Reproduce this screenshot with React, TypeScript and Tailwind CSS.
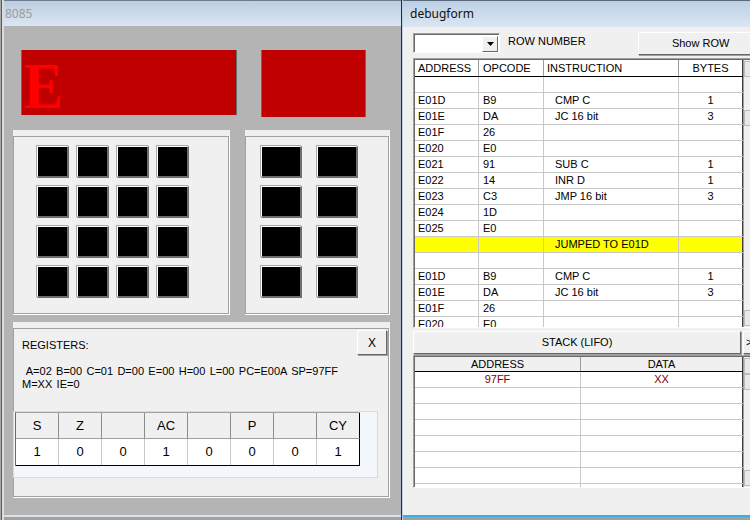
import React from "react";

const codeRows: { a: string; o: string; i: string; b: string; hl?: boolean }[] = [
  { a: "", o: "", i: "", b: "" },
  { a: "E01D", o: "B9", i: "CMP C", b: "1" },
  { a: "E01E", o: "DA", i: "JC 16 bit", b: "3" },
  { a: "E01F", o: "26", i: "", b: "" },
  { a: "E020", o: "E0", i: "", b: "" },
  { a: "E021", o: "91", i: "SUB C", b: "1" },
  { a: "E022", o: "14", i: "INR D", b: "1" },
  { a: "E023", o: "C3", i: "JMP 16 bit", b: "3" },
  { a: "E024", o: "1D", i: "", b: "" },
  { a: "E025", o: "E0", i: "", b: "" },
  { a: "", o: "", i: "JUMPED TO E01D", b: "", hl: true },
  { a: "", o: "", i: "", b: "" },
  { a: "E01D", o: "B9", i: "CMP C", b: "1" },
  { a: "E01E", o: "DA", i: "JC 16 bit", b: "3" },
  { a: "E01F", o: "26", i: "", b: "" },
  { a: "E020", o: "E0", i: "", b: "" },
];

const flags = [
  { h: "S", v: "1" },
  { h: "Z", v: "0" },
  { h: "", v: "0" },
  { h: "AC", v: "1" },
  { h: "", v: "0" },
  { h: "P", v: "0" },
  { h: "", v: "0" },
  { h: "CY", v: "1" },
];

// classic raised win32 button look
const raised =
  "bg-[#f0f0f0] border border-t-white border-l-white border-r-[#696969] border-b-[#696969] shadow-[1px_1px_0_#a0a0a0]";

const Key = ({ w }: { w: string }) => (
  <div
    className={`${w} h-[32px] bg-black border-t border-l border-t-white border-l-white border-r-2 border-b-2 border-r-[#6e6e6e] border-b-[#6e6e6e] shadow-[-1px_-1px_0_#a8a8a8]`}
  />
);

const Group = ({ className, children }: { className: string; children?: React.ReactNode }) => (
  <div className={`${className} shrink-0 bg-[#f0f0f0] pt-[6px] pr-[1px] pb-[1px]`}>
    <div className="h-full border border-[#a0a0a0] shadow-[1px_1px_0_#ffffff]">{children}</div>
  </div>
);

const ScrollBox = ({ className }: { className: string }) => (
  <div className={`${className} w-[16px] shrink-0 bg-[#e8e8e8] border border-[#bcbcbc]`} />
);

function Window8085() {
  return (
    <div className="w-[401px] h-full shrink-0 flex">
      <div className="w-[4px] h-full bg-[linear-gradient(to_right,#a8a8a8_0px,#a8a8a8_1px,#5c5c5c_1px,#5c5c5c_2px,#dcdcdc_2px,#dcdcdc_4px)]" />
      <div className="flex-1 flex flex-col">
        <div className="h-[26px] flex items-center pl-[1px] border-t border-[#6c7c8c] bg-gradient-to-b from-[#bdcddf] to-[#dbe6f2]">
          <span className="font-['Noto_Sans',sans-serif] text-[12px] text-[#9c9c9c]">8085</span>
        </div>

        <div className="flex-1 flex flex-col bg-[#b4b4b4] pl-[9px] pt-[24px]">
          {/* seven segment displays */}
          <div className="flex items-start ml-[8px] gap-[24px]">
            <div className="w-[216px] h-[65px] bg-[#c00000] border-x border-[#5f6f6f]">
              <div className="pl-[2px] pt-[10px] leading-[0.8] text-[66px] font-bold text-[#ff0000] font-['Liberation_Serif',serif] scale-x-[0.9] origin-left">
                E
              </div>
            </div>
            <div className="w-[105px] h-[67px] bg-[#c00000] border-x border-[#5f6f6f]" />
          </div>

          {/* keypads */}
          <div className="flex gap-[15px] mt-[13px]">
            <Group className="w-[217px] h-[185px]">
              <div className="grid grid-cols-4 gap-[8px] pl-[23px] pt-[9px] w-max">
                {Array.from({ length: 16 }).map((_, i) => (
                  <Key key={i} w="w-[32px]" />
                ))}
              </div>
            </Group>
            <Group className="w-[145px] h-[185px]">
              <div className="grid grid-cols-2 gap-x-[15px] gap-y-[8px] pl-[15px] pt-[9px] w-max">
                {Array.from({ length: 8 }).map((_, i) => (
                  <Key key={i} w="w-[41px]" />
                ))}
              </div>
            </Group>
          </div>

          {/* registers */}
          <Group className="w-[377px] h-[176px] mt-[7px]">
            <div className="flex flex-col">
              <div className="flex justify-between items-start">
                <div className="ml-[8px] mt-[10px] leading-[13px]">REGISTERS:</div>
                <button className={`${raised} w-[30px] h-[25px] mt-[1px] mr-[1px] flex items-center justify-center text-[12px]`}>
                  X
                </button>
              </div>
              <div className="ml-[8px] mt-[10px] leading-[13px] whitespace-pre [word-spacing:1.3px]">
                {" A=02 B=00 C=01 D=00 E=00 H=00 L=00 PC=E00A SP=97FF"}
                {"\n"}
                {"M=XX IE=0"}
              </div>
              <div className="-ml-px mt-[20px] w-[365px] h-[67px] border border-[#dadada] bg-[#f3f7fc] pl-px">
                <div className="w-max border-l border-[#696969] border-t border-t-[#a0a0a0]">
                  <div className="flex h-[26px]">
                    {flags.map((f, i) => (
                      <div
                        key={i}
                        className={`w-[43px] bg-[#f0f0f0] border-b border-[#a0a0a0] flex items-center justify-center text-[13px] ${
                          i === 7 ? "border-r border-r-black" : "border-r border-r-[#8c8c8c]"
                        }`}
                      >
                        {f.h}
                      </div>
                    ))}
                  </div>
                  <div className="flex h-[27px] border-b border-black bg-white">
                    {flags.map((f, i) => (
                      <div
                        key={i}
                        className={`w-[43px] flex items-center justify-center text-[13px] border-r ${
                          i === 7 ? "border-black" : "border-[#c8c8c8]"
                        }`}
                      >
                        {f.v}
                      </div>
                    ))}
                  </div>
                </div>
              </div>
            </div>
          </Group>
        </div>

        <div className="h-[5px] border-t-2 border-[#d9e3ed] bg-[#a0a0a0]" />
      </div>
    </div>
  );
}

function DebugForm() {
  return (
    <div className="flex-1 h-full flex border-l border-[#2b2b2b] min-w-0">
      <div className="w-px h-full bg-[#b9d1ea]" />
      <div className="flex-1 flex flex-col min-w-0">
        <div className="h-[27px] shrink-0 flex items-center pl-[7px] border-t border-[#5a6a7a] bg-gradient-to-b from-[#bcd0e4] to-[#dae6f2]">
          <span className="font-['Noto_Sans',sans-serif] text-[12px] text-[#111]">debugform</span>
        </div>

        <div className="flex-1 flex flex-col bg-[#f0f0f0] pl-[10px] pt-[5px] overflow-hidden">
          {/* top controls */}
          <div className="flex items-start h-[23px]">
            <div className="w-[87px] h-[20px] mt-px shrink-0 flex bg-white border-t border-l border-[#a0a0a0] border-r border-r-white border-b border-b-white">
              <div className="flex-1 flex border-t border-l border-[#696969]">
                <div className="flex-1" />
                <div className="w-[16px] h-[16px] mt-px mr-px bg-[#f0f0f0] border border-t-white border-l-white border-r-[#696969] border-b-[#696969] flex items-center justify-center">
                  <svg width="7" height="4" viewBox="0 0 7 4">
                    <path d="M0 0h7L3.5 4z" fill="#000" />
                  </svg>
                </div>
              </div>
            </div>
            <div className="ml-[8px] mt-[3px] leading-[13px] shrink-0">ROW NUMBER</div>
            <button className={`${raised} ml-[52px] w-[126px] h-[23px] shrink-0 flex items-center justify-center`}>
              Show ROW
            </button>
          </div>

          {/* code listview */}
          <div className="mt-[3px] w-[347px] h-[270px] shrink-0 flex flex-col border-t border-l border-[#a0a0a0] border-b border-b-white bg-white">
            <div className="flex-1 min-h-0 flex border-t border-l border-[#696969]">
              <div className="w-[328px] shrink-0 flex flex-col">
                <div className="flex h-[17px] shrink-0 border-b border-black leading-[16px]">
                  <div className="w-[64px] pl-[3px] border-r border-[#9a9a9a]">ADDRESS</div>
                  <div className="w-[65px] pl-[4px] border-r border-[#9a9a9a]">OPCODE</div>
                  <div className="w-[135px] pl-[3px] border-r border-[#9a9a9a]">INSTRUCTION</div>
                  <div className="w-[64px] text-center border-r border-[#404040]">BYTES</div>
                </div>
                <div className="flex-1 min-h-0 overflow-hidden">
                  {codeRows.map((r, i) => (
                    <div
                      key={i}
                      className={`flex h-[16px] border-b border-[#c8c8c8] leading-[15px] ${r.hl ? "bg-[#ffff00]" : ""}`}
                    >
                      <div className="w-[64px] pl-[3px] border-r border-[#c8c8c8]">{r.a}</div>
                      <div className="w-[65px] pl-[4px] border-r border-[#c8c8c8]">{r.o}</div>
                      <div className="w-[135px] pl-[11px] border-r border-[#c8c8c8]">{r.i}</div>
                      <div className="w-[64px] text-center border-r border-[#404040]">{r.b}</div>
                    </div>
                  ))}
                </div>
              </div>
              <div className="w-[17px] shrink-0 flex flex-col bg-[#f0f0f0] border-l border-[#a0a0a0] pt-px">
                <ScrollBox className="h-[16px]" />
                <ScrollBox className="h-[16px] mt-[33px]" />
                <div className="flex-1" />
                <ScrollBox className="h-[16px] mb-px" />
              </div>
            </div>
          </div>

          {/* stack button */}
          <div className="mt-[3px] flex shrink-0">
            <button className={`${raised} w-[328px] h-[23px] shrink-0 flex items-center justify-center`}>
              STACK (LIFO)
            </button>
            <button className={`${raised} ml-[2px] w-[20px] h-[23px] shrink-0 flex items-center pl-[2px]`}>
              &gt;
            </button>
          </div>

          {/* stack listview */}
          <div className="mt-px w-[347px] h-[133px] shrink-0 flex flex-col border-t border-l border-[#a0a0a0] border-b border-b-white bg-white">
            <div className="flex-1 min-h-0 flex border-t border-l border-[#696969]">
              <div className="w-[328px] shrink-0 flex flex-col">
                <div className="flex h-[15px] shrink-0 border-b border-black leading-[14px] bg-[#f0f0f0]">
                  <div className="w-[166px] text-center border-r border-[#9a9a9a]">ADDRESS</div>
                  <div className="w-[162px] text-center border-r border-[#404040]">DATA</div>
                </div>
                <div className="flex-1 min-h-0 overflow-hidden">
                  {Array.from({ length: 8 }).map((_, i) => (
                    <div key={i} className="flex h-[16px] border-b border-[#c8c8c8] leading-[15px] text-[#800000]">
                      <div className="w-[166px] text-center border-r border-[#c8c8c8]">{i === 0 ? "97FF" : ""}</div>
                      <div className="w-[162px] text-center border-r border-[#404040]">{i === 0 ? "XX" : ""}</div>
                    </div>
                  ))}
                </div>
              </div>
              <div className="w-[17px] shrink-0 flex flex-col bg-[#f0f0f0] border-l border-[#a0a0a0] pt-px">
                <ScrollBox className="h-[16px]" />
                <ScrollBox className="h-[16px]" />
                <div className="flex-1" />
                <ScrollBox className="h-[16px] mb-px" />
              </div>
            </div>
          </div>
          <div className="flex-1" />
        </div>

        <div className="h-[5px] shrink-0 border-t-2 border-[#3aaee0] bg-[#a0a0a0]" />
      </div>
    </div>
  );
}

export default function App() {
  return (
    <div className="w-[750px] h-[520px] overflow-hidden flex bg-[#a0a0a0] font-['Liberation_Sans',Arial,sans-serif] text-[11px] text-black">
      <Window8085 />
      <DebugForm />
    </div>
  );
}
